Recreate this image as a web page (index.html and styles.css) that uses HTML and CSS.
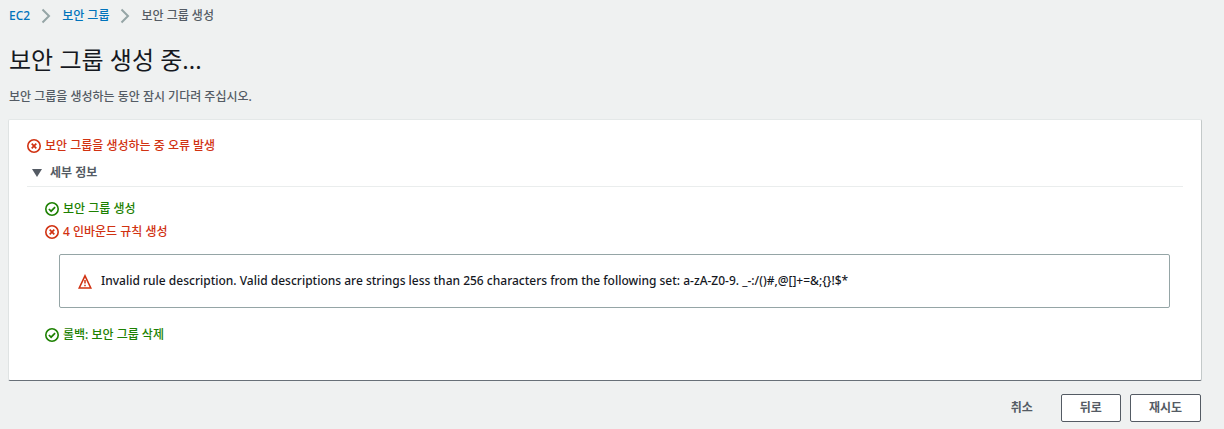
FILE: index.html
```html
<!DOCTYPE html>
<html lang="ko">
<head>
<meta charset="utf-8">
<meta name="viewport" content="width=device-width, initial-scale=1">
<title>보안 그룹 생성</title>
<link rel="stylesheet" href="styles.css">
</head>
<body>
<svg class="defs" aria-hidden="true">
  <symbol id="icon-error" viewBox="0 0 14 14"><circle cx="7" cy="7" r="6.200" stroke-width="1.600"/><path stroke-width="1.700" d="M4.700 4.700l4.600 4.600M9.300 4.700l-4.600 4.600"/></symbol>
  <symbol id="icon-success" viewBox="0 0 14 14"><circle cx="7" cy="7" r="6.200" stroke-width="1.600"/><path stroke-width="1.700" d="M3.900 7l2.200 2.200 4-4"/></symbol>
  <symbol id="icon-warning" viewBox="0 0 14 15"><path stroke-width="1.600" d="M7 1.800L12.800 14H1.200z"/><path stroke-width="1.500" d="M7 6v3.500M7 10.700v1.500"/></symbol>
  <symbol id="icon-chevron" viewBox="0 0 10 16"><path d="M1.500 1.500L8 8l-6.500 6.500"/></symbol>
</svg>
<main class="page">
  <nav class="breadcrumb" aria-label="탐색 경로">
    <a href="#ec2">EC2</a>
    <svg class="chevron" aria-hidden="true"><use href="#icon-chevron"/></svg>
    <a href="#groups">보안 그룹</a>
    <svg class="chevron" aria-hidden="true"><use href="#icon-chevron"/></svg>
    <span aria-current="page">보안 그룹 생성</span>
  </nav>
  <h1 class="title">보안 그룹 생성 중...</h1>
  <p class="description">보안 그룹을 생성하는 동안 잠시 기다려 주십시오.</p>
  <section class="panel">
    <p class="status error"><svg class="icon" aria-hidden="true"><use href="#icon-error"/></svg>보안 그룹을 생성하는 중 오류 발생</p>
    <details class="details" open>
      <summary class="summary"><svg class="caret" viewBox="0 0 10 8" aria-hidden="true"><path d="M0 0h10L5 8z"/></svg>세부 정보</summary>
      <div class="steps">
        <p class="status success"><svg class="icon" aria-hidden="true"><use href="#icon-success"/></svg>보안 그룹 생성</p>
        <p class="status error"><svg class="icon" aria-hidden="true"><use href="#icon-error"/></svg>4 인바운드 규칙 생성</p>
        <div class="alert" role="alert"><svg class="icon alert-icon" aria-hidden="true"><use href="#icon-warning"/></svg><span>Invalid rule description. Valid descriptions are strings less than 256 characters from the following set: a-zA-Z0-9. _-:/()#,@[]+=&amp;;{}!$*</span></div>
        <p class="status success"><svg class="icon" aria-hidden="true"><use href="#icon-success"/></svg>롤백: 보안 그룹 삭제</p>
      </div>
    </details>
  </section>
  <footer class="actions">
    <button class="button link" type="button">취소</button>
    <button class="button" type="button">뒤로</button>
    <button class="button" type="button">재시도</button>
  </footer>
</main>
</body>
</html>
```
FILE: styles.css
```css
* {
  box-sizing: border-box;
}

body {
  margin: 0;
  background: #eff1f1;
  color: #16191f;
  font: 500 12px/20px "Noto Sans", "Noto Sans CJK KR", sans-serif;
}

.defs {
  display: none;
}

.page {
  padding: 6px 22px 8px 9px;
}

.breadcrumb {
  display: flex;
  align-items: center;
  color: #545b64;
}

.breadcrumb a {
  color: #0073bb;
  text-decoration: none;
}

.chevron {
  width: 10px;
  height: 16px;
  margin: 0 11px;
  fill: none;
  stroke: #95a5a6;
  stroke-width: 2;
}

.title {
  margin: 19px 0 0;
  font-size: 24px;
  font-weight: 400;
  line-height: 30px;
}

.description {
  margin: 12px 0;
  color: #545b64;
}

.panel {
  margin-left: -1px;
  padding: 16px 18px 35px;
  background: #fff;
  border-top: 1px solid #e4e8e8;
  border-right: 1px solid #c3c9c9;
  border-bottom: 1px solid #687078;
  border-left: 1px solid #dfe3e3;
  border-radius: 2px;
}

.status {
  display: flex;
  align-items: center;
  gap: 4px;
  margin: 0;
}

.error {
  color: #d13212;
}

.success {
  color: #1d8102;
}

.icon {
  flex: none;
  width: 14px;
  height: 14px;
  fill: none;
  stroke: currentColor;
}

.summary {
  display: flex;
  align-items: center;
  gap: 8px;
  margin-top: 6px;
  padding: 1px 5px 3px;
  border-bottom: 1px solid #eaeded;
  color: #545b64;
  font-weight: 700;
  list-style: none;
  cursor: pointer;
}

.caret {
  width: 10px;
  height: 8px;
  fill: #545b64;
}

.steps {
  display: grid;
  gap: 3px;
  padding: 12px 13px 0 18px;
}

.alert {
  display: flex;
  align-items: center;
  gap: 9px;
  margin: 9px 0 14px 14px;
  padding: 16px 18px;
  border: 1px solid #95a5a6;
  border-radius: 2px;
}

.alert-icon {
  height: 15px;
  color: #d13212;
}

.actions {
  display: flex;
  justify-content: flex-end;
  gap: 9px;
  padding: 13px 1px 0 0;
}

.button {
  padding: 3px 18px;
  border: 1px solid #545b64;
  border-radius: 2px;
  background: #fff;
  color: #545b64;
  font: inherit;
  font-weight: 700;
  cursor: pointer;
}

.link {
  border-color: transparent;
  background: transparent;
}
```
